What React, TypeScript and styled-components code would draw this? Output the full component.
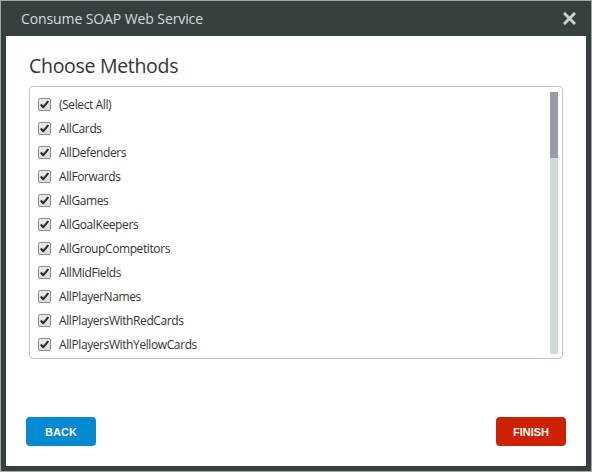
import React from "react";
import styled, { createGlobalStyle } from "styled-components";

const Global = createGlobalStyle`
  html, body { margin: 0; padding: 0; background: #ffffff; }
  * { box-sizing: border-box; }
`;

const Frame = styled.div`
  width: 592px;
  height: 472px;
  border: 1px solid #a3a9a9;
  background: #364041;
  padding: 0 5px 5px 5px;
  display: flex;
  flex-direction: column;
  font-family: "Open Sans", "Liberation Sans", sans-serif;
`;

const TitleBar = styled.div`
  height: 35px;
  display: flex;
  align-items: center;
  justify-content: space-between;
  padding: 0 9px 0 15px;
  flex: none;
`;

const Title = styled.div`
  color: #d6dbdb;
  font-size: 14px;
  letter-spacing: -0.1px;
`;

const Close = styled.button`
  border: 0;
  background: transparent;
  padding: 0;
  width: 16px;
  height: 16px;
  display: flex;
  align-items: center;
  justify-content: center;
  cursor: pointer;
`;

const Panel = styled.div`
  flex: 1;
  background: #ffffff;
  display: flex;
  flex-direction: column;
  padding: 0 23px;
`;

const Heading = styled.h1`
  margin: 16px 0 0 0;
  height: 34px;
  font-weight: 400;
  font-size: 19.5px;
  color: #333333;
  letter-spacing: -0.3px;
  line-height: 28px;
`;

const ListBox = styled.div`
  height: 273px;
  border: 1px solid #c2c2c2;
  border-radius: 4px;
  display: flex;
  padding: 4px 4px 4px 0;
`;

const Rows = styled.div`
  flex: 1;
  overflow: hidden;
  padding-top: 1px;
`;

const Row = styled.label`
  height: 24px;
  display: flex;
  align-items: center;
  padding-left: 8px;
  gap: 8px;
  font-size: 12px;
  color: #333333;
  letter-spacing: -0.4px;
`;

const Box = styled.span`
  width: 13px;
  height: 13px;
  border: 1px solid #8e8e8e;
  border-radius: 2px;
  background: linear-gradient(#ebebeb, #d9d9d9);
  display: flex;
  align-items: center;
  justify-content: center;
  flex: none;
`;

const ScrollTrack = styled.div`
  width: 8px;
  margin-top: 1px;
  background: #d0dadb;
  display: flex;
  flex-direction: column;
`;

const ScrollThumb = styled.div`
  height: 66px;
  background: #939ea3;
`;

const Footer = styled.div`
  margin-top: auto;
  padding: 0 0 20px 0;
  margin-left: -3px;
  margin-right: -3px;
  display: flex;
  justify-content: space-between;
`;

const Btn = styled.button<{ $tone: "blue" | "red" }>`
  width: 70px;
  height: 29px;
  border: 0;
  border-radius: 4px;
  background: ${(p) => (p.$tone === "blue" ? "#0389d0" : "#cc2200")};
  color: #ffffff;
  font-family: "Liberation Sans", Arial, sans-serif;
  font-weight: 700;
  font-size: 11px;
  cursor: pointer;
`;

const items = [
  "(Select All)",
  "AllCards",
  "AllDefenders",
  "AllForwards",
  "AllGames",
  "AllGoalKeepers",
  "AllGroupCompetitors",
  "AllMidFields",
  "AllPlayerNames",
  "AllPlayersWithRedCards",
  "AllPlayersWithYellowCards",
];

const Check = () => (
  <svg width="11" height="11" viewBox="0 0 11 11">
    <path d="M1.8 5.6 L4.3 8.2 L9.3 2.2" fill="none" stroke="#2b2b2b" strokeWidth="2.1" strokeLinejoin="round" />
  </svg>
);

export default function App() {
  return (
    <>
      <Global />
      <Frame>
        <TitleBar>
          <Title>Consume SOAP Web Service</Title>
          <Close aria-label="close">
            <svg width="13" height="13" viewBox="0 0 13 13">
              <path d="M2 2 L11 11 M11 2 L2 11" stroke="#c9cfcf" strokeWidth="3" strokeLinecap="square" />
            </svg>
          </Close>
        </TitleBar>
        <Panel>
          <Heading>Choose Methods</Heading>
          <ListBox>
            <Rows>
              {items.map((it) => (
                <Row key={it}>
                  <Box>
                    <Check />
                  </Box>
                  {it}
                </Row>
              ))}
            </Rows>
            <ScrollTrack>
              <ScrollThumb />
            </ScrollTrack>
          </ListBox>
          <Footer>
            <Btn $tone="blue">BACK</Btn>
            <Btn $tone="red">FINISH</Btn>
          </Footer>
        </Panel>
      </Frame>
    </>
  );
}
